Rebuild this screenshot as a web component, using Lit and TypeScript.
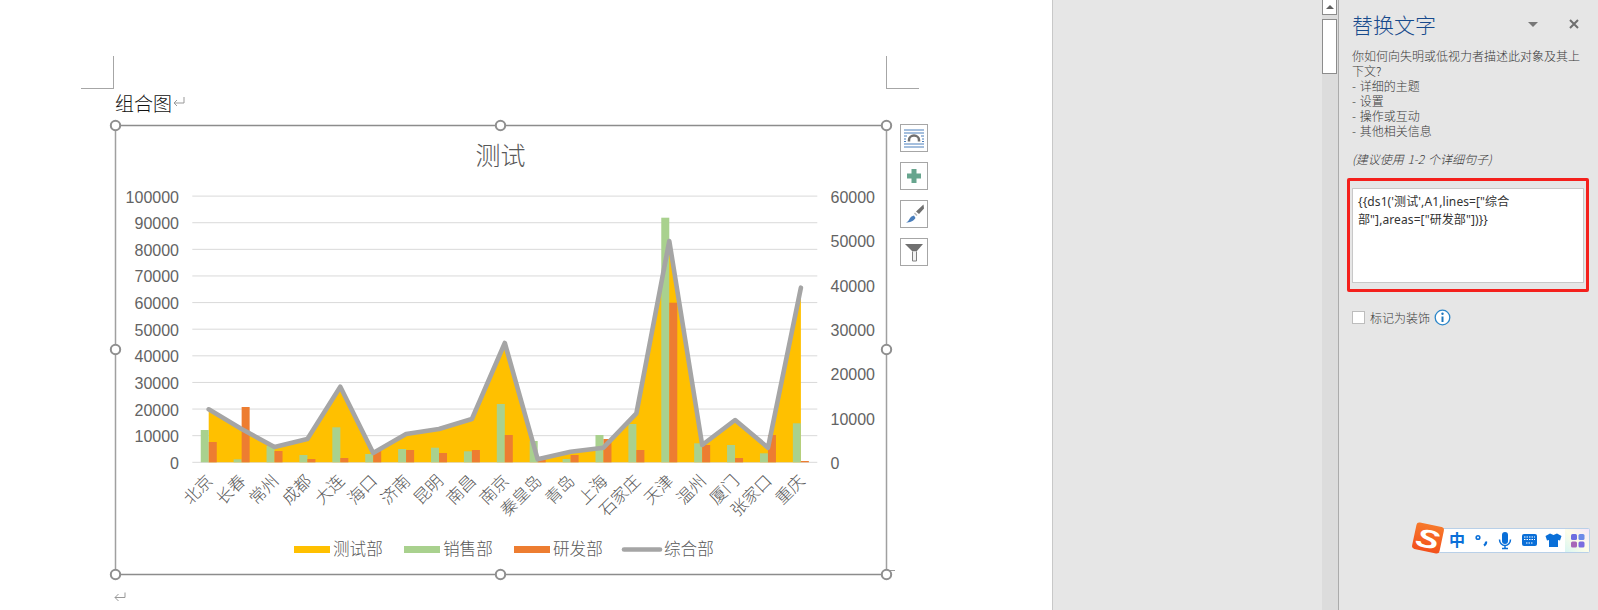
import { LitElement, html, css, svg } from "lit";
import { customElement } from "lit/decorators.js";

const X0 = 192.3, X1 = 817.3, Y0 = 462.3, STEP = 26.62;
const cats: [string, number, number, number][] = [
  ["北京", 409.3, 430, 442],
  ["长春", 429, 459.3, 407],
  ["常州", 447, 446, 451],
  ["成都", 439, 455, 459],
  ["大连", 386.7, 427.3, 458],
  ["海口", 453, 454, 451],
  ["济南", 434, 449, 450],
  ["昆明", 429, 447.7, 453],
  ["南昌", 419, 451.3, 450],
  ["南京", 343, 404, 435],
  ["秦皇岛", 459.3, 441, 459.5],
  ["青岛", 451.7, 459, 455],
  ["上海", 447.7, 435, 439],
  ["石家庄", 413.3, 424, 450],
  ["天津", 241, 217.7, 302.7],
  ["温州", 445, 443.3, 445],
  ["厦门", 420, 445, 458],
  ["张家口", 447.7, 453.3, 435],
  ["重庆", 287.7, 423.3, 461],
];
const catW = (X1 - X0) / cats.length;
const cx = (i: number) => X0 + catW * (i + 0.5);
const leftTicks = [0, 1, 2, 3, 4, 5, 6, 7, 8, 9, 10];
const rightTicks = [0, 10000, 20000, 30000, 40000, 50000, 60000];
const linePts = cats.map((c, i) => `${cx(i).toFixed(1)},${c[1]}`).join(" ");
const areaPts =
  `${cx(0).toFixed(1)},${Y0} ` +
  cats.map((c, i) => `${cx(i).toFixed(1)},${(Y0 - (Y0 - c[1]) * 0.965).toFixed(1)}`).join(" ") +
  ` ${cx(cats.length - 1).toFixed(1)},${Y0}`;
const handles = [
  [115.5, 125.5], [500.5, 125.5], [886.5, 125.5],
  [115.5, 349.5], [886.5, 349.5],
  [115.5, 574.5], [500.5, 574.5], [886.5, 574.5],
];
const legend: [number, string, string][] = [
  [294, "#ffc000", "测试部"],
  [404, "#a9d18e", "销售部"],
  [514, "#ed7d31", "研发部"],
];

@customElement("app-root")
export class AppRoot extends LitElement {
  static styles = css`
    :host { display: block; position: relative; width: 1598px; height: 610px; overflow: hidden; font-family: "Liberation Sans", "Noto Sans CJK SC", sans-serif; }
    .app { display: flex; height: 610px; background: #e6e6e6; }
    .doc { width: 1053px; box-sizing: border-box; background: #fff; border-right: 1px solid #c8c8c8; padding: 56px 0 0 81px; flex: none; }
    .crops { display: flex; justify-content: space-between; width: 838px; height: 33px; }
    .crop { width: 33px; height: 33px; box-sizing: border-box; border-bottom: 1px solid #a6a6a6; }
    .crop.l { border-right: 1px solid #a6a6a6; }
    .crop.r { border-left: 1px solid #a6a6a6; }
    .heading { display: flex; align-items: center; margin-left: 34px; height: 26px; font-size: 19px; color: #111; font-family: "Noto Sans CJK SC", sans-serif; font-weight: 300; }
    .heading svg { margin-left: 1px; }
    .chartrow { display: flex; margin-left: 24px; height: 470px; }
    .chart { width: 790px; height: 470px; display: block; flex: none; }
    .tools { display: flex; flex-direction: column; gap: 10px; margin: 9px 0 0 5px; }
    .tool { width: 28px; height: 28px; box-sizing: border-box; border: 1px solid #a6a6a6; background: #fff; display: block; }
    .tail { display: block; margin: 7px 0 0 33px; }
    .axis { font-size: 16px; fill: #636363; font-family: "Liberation Sans", sans-serif; }
    .cat { font-size: 16.6px; fill: #595959; font-family: "Noto Sans CJK SC", sans-serif; font-weight: 300; }
    .title { font-size: 25px; fill: #595959; font-family: "Noto Sans CJK SC", sans-serif; font-weight: 300; }
    .gutter { flex: 1; }
    .scroll { width: 16px; flex: none; background: #dcdcdc; border-right: 1px solid #ababab; display: flex; flex-direction: column; gap: 4px; }
    .btn { width: 15px; height: 15px; box-sizing: border-box; border: 1px solid #8c8c8c; border-top: 0; background: #fff; display: flex; align-items: center; justify-content: center; }
    .arrow { width: 0; height: 0; border-left: 4px solid transparent; border-right: 4px solid transparent; border-bottom: 4px solid #606060; }
    .thumb { width: 15px; height: 55px; box-sizing: border-box; border: 1px solid #8c8c8c; background: #fff; }
    .pane { width: 259px; flex: none; box-sizing: border-box; padding: 0 0 0 8px; font-family: "Noto Sans CJK SC", sans-serif; font-weight: 300; color: #3a3a3a; }
    .head { display: flex; align-items: center; height: 48px; padding: 0 0 0 5px; }
    .head h1 { margin: 0; flex: 1; font-size: 21px; font-weight: 300; color: #174a8c; line-height: 48px; }
    .head .tri { width: 0; height: 0; border-left: 5px solid transparent; border-right: 5px solid transparent; border-top: 5px solid #777; margin-right: 30px; }
    .head svg { margin-right: 18px; }
    .desc { margin: 0; padding-left: 5px; font-size: 12px; line-height: 15px; width: 235px; height: 90px; word-spacing: 1px; }
    .hint { margin: 13px 0 0; padding-left: 5px; font-size: 12px; line-height: 15px; height: 10px; font-style: italic; word-spacing: 1px; }
    .red { margin-top: 17px; width: 242px; height: 114px; box-sizing: border-box; border: 3px solid #f4201c; border-radius: 2px; padding: 7px 2px 6px; }
    .ta { width: 100%; height: 95px; box-sizing: border-box; background: #fff; border: 1px solid #c8c8c8; padding: 4px 5px; font: 12px/17.5px "Noto Sans", "Noto Sans CJK SC", sans-serif; letter-spacing: 0.1px; color: #333; }
    .deco { display: flex; align-items: center; margin: 17px 0 0 5px; height: 16px; font-size: 12px; }
    .box { width: 13px; height: 13px; box-sizing: border-box; background: #fff; border: 1px solid #bdbdbd; margin-right: 5px; }
    .deco svg { margin-left: 4px; }
    .ime { position: absolute; left: 1410px; top: 520px; width: 184px; height: 36px; display: block; }
    .zh { font: bold 16px "Noto Sans CJK SC", sans-serif; fill: #0a6fd8; }
    .s { font: italic bold 29px "Liberation Sans", sans-serif; fill: #fff; }
  `;

  private chart() {
    return html`<svg class="chart" viewBox="105 115 790 470" xmlns="http://www.w3.org/2000/svg">
      ${leftTicks.map((t) => {
        const y = Y0 - t * STEP;
        return svg`<line x1=${X0} x2=${X1} y1=${y} y2=${y} stroke="#d9d9d9" stroke-width="1"></line>
          <text class="axis" x="179" y=${y + 6.5} text-anchor="end">${t * 10000}</text>`;
      })}
      ${rightTicks.map((t, i) => svg`<text class="axis" x="830.5" y=${Y0 + 6.5 - i * 44.3}>${t}</text>`)}
      <text class="title" x="500.5" y="165" text-anchor="middle">测试</text>
      <polygon points=${areaPts} fill="#ffc000"></polygon>
      ${cats.map((c, i) => svg`
        <rect x=${cx(i) - 8} y=${c[2]} width="8" height=${Y0 - c[2]} fill="#a9d18e"></rect>
        <rect x=${cx(i)} y=${c[3]} width="8" height=${Y0 - c[3]} fill="#ed7d31"></rect>`)}
      <polyline points=${linePts} fill="none" stroke="#a5a5a5" stroke-width="4.6" stroke-linejoin="round" stroke-linecap="round"></polyline>
      ${cats.map((c, i) => svg`<text class="cat" text-anchor="end" dy="0.35em"
        transform="translate(${cx(i) + 1} 478) rotate(-45)">${c[0]}</text>`)}
      ${legend.map(([x, col, t]) => svg`<rect x=${x} y="546" width="36" height="7" fill=${col}></rect>
        <text class="cat" x=${x + 39} y="555">${t}</text>`)}
      <line x1="624" x2="660" y1="549.5" y2="549.5" stroke="#a5a5a5" stroke-width="4.6" stroke-linecap="round"></line>
      <text class="cat" x="664" y="555">综合部</text>
      <path d="M115.500 125.500V574.500M886.500 125.500V574.500" fill="none" stroke="#a0a0a0" stroke-width="1.500"></path>
      <path d="M115.500 125.500H886.500M115.500 574.500H886.500" fill="none" stroke="#8c8c8c" stroke-width="1.500"></path>
      <path d="M898 565.500V570.500H889" fill="none" stroke="#999" stroke-width="1"></path>
      ${handles.map(([x, y]) => svg`<circle cx=${x} cy=${y} r="4.7" fill="#fff" stroke="#8f8f8f" stroke-width="2"></circle>`)}
    </svg>`;
  }

  private tools() {
    return html`<div class="tools">
      <svg class="tool" viewBox="0 0 26 26">
        <path d="M3 5H23M3 8H23M3 19H23M3 22H23" stroke="#4a7ebb" stroke-width="1"></path>
        <path d="M3 11H6M20 11H23M3 14H5M21 14H23M3 16.500H5M21 16.500H23" stroke="#4a7ebb" stroke-width="1"></path>
        <path d="M8 16.500V15A5 4.500 0 0 1 18 15V16.500" fill="none" stroke="#707070" stroke-width="2.500"></path>
      </svg>
      <svg class="tool" viewBox="0 0 26 26"><path d="M13 6V20M6 13H20" stroke="#67a58e" stroke-width="5"></path></svg>
      <svg class="tool" viewBox="0 0 26 26">
        <path d="M22.500 3.500L23 7.500L18 13L15 10.500Z" fill="#707070"></path>
        <path d="M5 21.500C8 20.500 8 17.500 10.500 15.500L13 14.500L14.500 17C12 20.500 9 21.500 5 21.500Z" fill="#4a7ebb"></path>
        <path d="M13.500 12L16 14.500" stroke="#b9b9b9" stroke-width="1.500"></path>
      </svg>
      <svg class="tool" viewBox="0 0 26 26">
        <path d="M4 5H22L15.500 12.500H11.500Z" fill="#707070"></path>
        <path d="M11.500 12.500V22H15.500V12.500" fill="#f2f2f2" stroke="#808080" stroke-width="1"></path>
      </svg>
    </div>`;
  }

  private ime() {
    return html`<svg class="ime" viewBox="1410 520 184 36">
      <defs>
        <linearGradient id="glow" x1="0" y1="1" x2="1" y2="0">
          <stop offset="0" stop-color="#d8f5f3"></stop><stop offset="0.5" stop-color="#fdfde8"></stop><stop offset="1" stop-color="#f5e6fb"></stop>
        </linearGradient>
        <linearGradient id="logo" x1="0" y1="0" x2="0" y2="1">
          <stop offset="0" stop-color="#f7792b"></stop><stop offset="1" stop-color="#f3501c"></stop>
        </linearGradient>
      </defs>
      <rect x="1438.500" y="528.500" width="151" height="24" rx="1" fill="#fff" stroke="#b9d0e8"></rect>
      <rect x="1565" y="529" width="24" height="23" fill="url(#glow)"></rect>
      <g transform="rotate(12 1428 538)">
        <rect x="1414" y="524.500" width="28" height="27" rx="3" fill="url(#logo)"></rect>
        <text class="s" x="1428" y="548" text-anchor="middle" transform="translate(1428 548) scale(1.200 0.900) translate(-1428 -548)">S</text>
      </g>
      <text class="zh" x="1449" y="546">中</text>
      <circle cx="1478" cy="537.500" r="1.800" fill="none" stroke="#0a6fd8" stroke-width="1.600"></circle>
      <path d="M1486 541.500C1486.500 543.500 1485.500 544.500 1484 545.500" fill="none" stroke="#0a6fd8" stroke-width="2.200"></path>
      <rect x="1502" y="532" width="6" height="12" rx="3" fill="#0a6fd8"></rect>
      <path d="M1499.500 539.500A5.500 6 0 0 0 1510.500 539.500M1505 545.500V548M1502 548.500H1508" fill="none" stroke="#0a6fd8" stroke-width="1.500"></path>
      <rect x="1522" y="534" width="15" height="12" rx="2" fill="#0a6fd8"></rect>
      <path d="M1524 537H1535M1524 539.500H1535M1526 543H1533" stroke="#fff" stroke-width="1.200" stroke-dasharray="1.500 1"></path>
      <path d="M1550 533.500L1553.500 535L1557 533.500L1561.500 536L1560 540.500L1558 540V547H1549V540L1547 540.500L1545.500 536Z" fill="#0a6fd8"></path>
      <rect x="1571" y="534" width="6" height="6" rx="1.500" fill="#6d6de0"></rect>
      <rect x="1578.500" y="534" width="6" height="6" rx="1.500" fill="#6d8ae8"></rect>
      <rect x="1571" y="541.500" width="6" height="6" rx="1.500" fill="#a767b8"></rect>
      <rect x="1578.500" y="541.500" width="6" height="6" rx="1.500" fill="#7a6ce0"></rect>
    </svg>`;
  }

  render() {
    return html`<div class="app">
      <section class="doc">
        <div class="crops"><div class="crop l"></div><div class="crop r"></div></div>
        <div class="heading">组合图
          <svg width="12" height="12" viewBox="0 0 12 12"><path d="M11 1V7H1M4 4L1 7L4 10" fill="none" stroke="#999"></path></svg>
        </div>
        <div class="chartrow">${this.chart()}${this.tools()}</div>
        <svg class="tail" width="12" height="10" viewBox="0 0 12 10"><path d="M11 .5V5.500H1M4.500 2L1 5.500L4.500 9" fill="none" stroke="#999"></path></svg>
      </section>
      <div class="gutter"></div>
      <div class="scroll">
        <div class="btn"><div class="arrow"></div></div>
        <div class="thumb"></div>
      </div>
      <aside class="pane">
        <div class="head">
          <h1>替换文字</h1>
          <div class="tri"></div>
          <svg width="12" height="12" viewBox="0 0 12 12"><path d="M2 2L10 10M10 2L2 10" stroke="#6e6e6e" stroke-width="2"></path></svg>
        </div>
        <p class="desc">你如何向失明或低视力者描述此对象及其上下文?<br />- 详细的主题<br />- 设置<br />- 操作或互动<br />- 其他相关信息</p>
        <p class="hint">(建议使用 1-2 个详细句子)</p>
        <div class="red"><div class="ta">{{ds1('测试',A1,lines=["综合<br />部"],areas=["研发部"])}}</div></div>
        <div class="deco">
          <div class="box"></div>标记为装饰
          <svg width="17" height="17" viewBox="0 0 17 17">
            <circle cx="8.500" cy="8.500" r="7.300" fill="#fff" stroke="#2b86c9" stroke-width="1.300"></circle>
            <path d="M8.500 7.500V13" stroke="#1f78bd" stroke-width="2"></path>
            <circle cx="8.500" cy="4.800" r="1.200" fill="#1f78bd"></circle>
          </svg>
        </div>
      </aside>
    </div>${this.ime()}`;
  }
}
